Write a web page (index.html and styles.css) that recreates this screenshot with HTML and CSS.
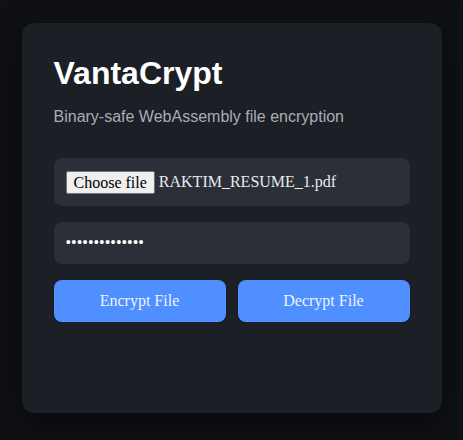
FILE: index.html
```html
<!DOCTYPE html>
<html lang="en">
<head>
<meta charset="utf-8">
<title>VantaCrypt</title>
<link rel="stylesheet" href="styles.css">
</head>
<body>
  <main class="card">
    <h1 class="title">VantaCrypt</h1>
    <p class="subtitle">Binary-safe WebAssembly file encryption</p>
    <div class="form">
      <div class="field file-field">
        <span class="file-btn">Choose file</span>
        <span class="file-name">RAKTIM_RESUME_1.pdf</span>
      </div>
      <input class="field password" type="password" value="12345678901234">
      <div class="actions">
        <button class="btn" type="button">Encrypt File</button>
        <button class="btn" type="button">Decrypt File</button>
      </div>
    </div>
  </main>
</body>
</html>
```

FILE: styles.css
```css
* { box-sizing: border-box; }

html, body {
  margin: 0;
  height: 100%;
}

body {
  background: #0f1115;
  font-family: "Liberation Sans", Arial, sans-serif;
  color: #ffffff;
  display: flex;
  justify-content: center;
  align-items: flex-start;
  padding-top: 23px;
}

.card {
  width: 420px;
  min-height: 390px;
  background: #1c1f26;
  border-radius: 12px;
  padding: 32px;
  box-shadow: 0 10px 30px rgba(0, 0, 0, 0.55);
}

.title {
  margin: 0 0 16px;
  font-size: 32px;
  font-weight: bold;
  color: #ffffff;
  line-height: 1.15;
}

.subtitle {
  margin: 0 0 32px;
  font-size: 16px;
  color: #a9adb3;
  line-height: 1.15;
}

.form {
  display: flex;
  flex-direction: column;
  gap: 16px;
}

.field {
  width: 100%;
  background: #2a2f38;
  border: none;
  border-radius: 8px;
  padding: 12px;
  font-family: "Liberation Serif", "Times New Roman", serif;
  font-size: 16px;
  color: #ffffff;
}

.file-field {
  display: flex;
  align-items: center;
  height: 48px;
}

.file-btn {
  background: #efefef;
  color: #000000;
  border: 1px solid #767676;
  border-radius: 2px;
  padding: 1px 7px;
  line-height: 19px;
  margin-right: 4px;
}

.file-name {
  color: #e8eaed;
}

.password {
  height: 42px;
  outline: none;
  letter-spacing: 0;
}

.actions {
  display: grid;
  grid-template-columns: 1fr 1fr;
  gap: 12px;
}

.btn {
  height: 42px;
  background: #4f8fff;
  border: none;
  border-radius: 8px;
  color: #eef3ff;
  font-family: "Liberation Serif", "Times New Roman", serif;
  font-size: 16px;
  padding: 0;
}
```
